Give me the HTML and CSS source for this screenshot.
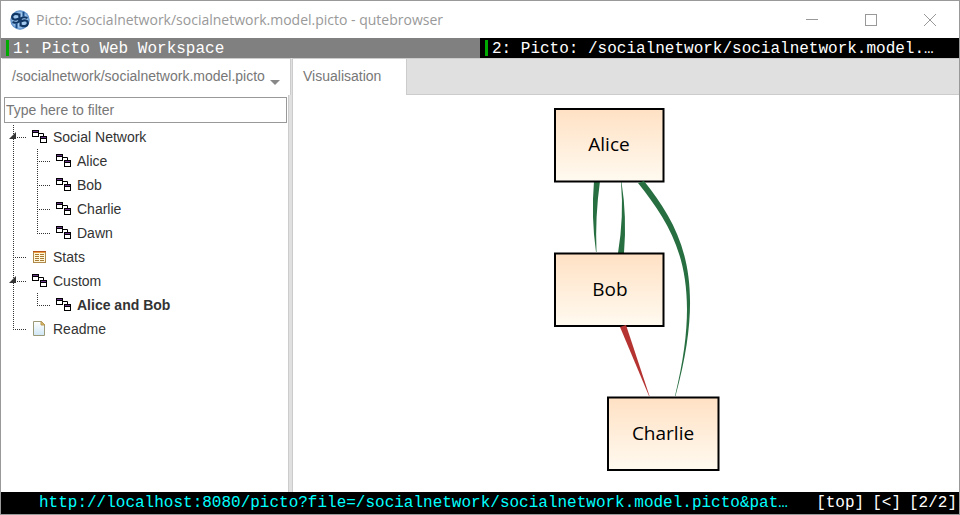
FILE: index.html
```html
<!DOCTYPE html>
<html lang="en">
<head>
<meta charset="utf-8">
<title>Picto: /socialnetwork/socialnetwork.model.picto - qutebrowser</title>
<link rel="stylesheet" href="styles.css">
</head>
<body>
<svg class="sprites" aria-hidden="true">
  <symbol id="graph" viewBox="0 0 16 16">
    <path d="M7 4.500H11.500V7" fill="none" stroke="#000"/>
    <rect x=".5" y="1.500" width="6" height="6" fill="#fff" stroke="#000"/>
    <rect x="1" y="2" width="5" height="1" fill="#6b3a8c"/>
    <path d="M1 3.500H6" stroke="#000"/>
    <rect x="8.500" y="7.500" width="6" height="6" fill="#fff" stroke="#000"/>
    <rect x="9" y="8" width="5" height="1" fill="#6b3a8c"/>
    <path d="M9 9.500H14" stroke="#000"/>
  </symbol>
  <symbol id="table" viewBox="0 0 16 16">
    <rect x="1.500" y="2.500" width="12" height="11" fill="#fff7dc" stroke="#b08a4a"/>
    <path d="M1 2.500H14" stroke="#b5541c"/>
    <path d="M2 3.500H13" stroke="#f0a040"/>
    <path d="M3 5.500H7M8 5.500H12M3 7.500H7M8 7.500H12M3 9.500H7M8 9.500H12M3 11.500H7M8 11.500H12" stroke="#a87a32"/>
  </symbol>
  <symbol id="page" viewBox="0 0 16 16">
    <linearGradient id="sheet" x2="0" y2="1"><stop offset="0" stop-color="#fff"/><stop offset="1" stop-color="#cfe6f5"/></linearGradient>
    <path d="M1.500 .5H9.500L12.500 3.500V14.500H1.500Z" fill="url(#sheet)" stroke="#9b9a78"/>
    <path d="M9 .5V4H13Z" fill="#dfb967" stroke="#b99a52"/>
  </symbol>
</svg>
<div class="window">
  <header class="titlebar">
    <svg class="logo" viewBox="0 0 20 20" aria-hidden="true">
      <radialGradient id="orb"><stop offset="0" stop-color="#b9dbfa"/><stop offset=".75" stop-color="#9cc4ec"/><stop offset="1" stop-color="#477fbd"/></radialGradient>
      <circle cx="10" cy="10" r="9.700" fill="url(#orb)"/>
      <path d="M8.800 4.600C5.500 3 2.300 4.200 2.200 6.800C2.200 9.800 5.500 10.300 8.500 8.800M9.400 3.500V10C9.400 12.500 6.500 13.600 2.500 12M10.600 16.500V10C10.600 7.500 13.500 6.400 17.500 8M11.200 15.400C14.500 17 17.700 15.800 17.800 13.200C17.800 10.200 14.500 9.700 11.500 11.200" fill="none" stroke="#103765" stroke-width="2.200"/>
      <path d="M13.500 2V6.500M6.500 18V13.500" stroke="#174b85" stroke-width="2"/>
    </svg>
    <h1 class="caption">Picto: /socialnetwork/socialnetwork.model.picto - qutebrowser</h1>
    <button class="control" aria-label="Minimise"><svg viewBox="0 0 12 12"><path d="M0 5.500H12"/></svg></button>
    <button class="control" aria-label="Maximise"><svg viewBox="0 0 12 12"><rect x=".5" y=".5" width="11" height="11"/></svg></button>
    <button class="control" aria-label="Close"><svg viewBox="0 0 12 12"><path d="M0 0L12 12M12 0L0 12"/></svg></button>
  </header>
  <nav class="tabs">
    <a class="tab" href="#workspace">1: Picto Web Workspace</a>
    <a class="tab current" href="#picto">2: Picto: /socialnetwork/socialnetwork.model.…</a>
  </nav>
  <main class="panes">
    <aside class="side">
      <div class="side-head"><button class="file-tab"><span>/socialnetwork/socialnetwork.model.picto</span><i class="caret"></i></button></div>
      <div class="side-body">
        <input class="filter" type="text" placeholder="Type here to filter" aria-label="Filter views">
        <ul class="tree">
          <li>
            <div class="row"><button class="toggle" aria-label="Collapse Social Network"></button><svg class="icon"><use href="#graph"/></svg><a href="#n1">Social Network</a></div>
            <ul class="branch">
              <li class="row"><svg class="icon"><use href="#graph"/></svg><a href="#n2">Alice</a></li>
              <li class="row"><svg class="icon"><use href="#graph"/></svg><a href="#n3">Bob</a></li>
              <li class="row"><svg class="icon"><use href="#graph"/></svg><a href="#n4">Charlie</a></li>
              <li class="row"><svg class="icon"><use href="#graph"/></svg><a href="#n5">Dawn</a></li>
            </ul>
          </li>
          <li class="row"><svg class="icon"><use href="#table"/></svg><a href="#n6">Stats</a></li>
          <li>
            <div class="row"><button class="toggle" aria-label="Collapse Custom"></button><svg class="icon"><use href="#graph"/></svg><a href="#n7">Custom</a></div>
            <ul class="branch">
              <li class="row"><svg class="icon"><use href="#graph"/></svg><a class="active" href="#n8">Alice and Bob</a></li>
            </ul>
          </li>
          <li class="row"><svg class="icon"><use href="#page"/></svg><a href="#n9">Readme</a></li>
        </ul>
      </div>
    </aside>
    <section class="view">
      <div class="view-head"><button class="view-tab">Visualisation</button></div>
      <div class="canvas">
        <svg class="diagram" viewBox="0 0 168 364" role="img" aria-label="Social network of Alice, Bob and Charlie">
          <linearGradient id="peach" x2="0" y2="1"><stop offset="0" stop-color="#ffe1c4"/><stop offset="1" stop-color="#fffaf0"/></linearGradient>
          <g fill="#276e41">
            <path d="M41 74H47Q42 110 43.500 145H43Q38 110 41 74Z"/>
            <path d="M68 75H68.500Q74 110 71 146H65Q71 110 68 75Z"/>
          </g>
          <g class="node">
            <rect x="2" y="2" width="108.500" height="72.500"/>
            <rect x="2" y="146.500" width="108.500" height="72.500"/>
            <rect x="55" y="290.500" width="110.500" height="72.500"/>
          </g>
          <path d="M91 74C128 121 155 170 122.500 289H122C151 170 123 124 85 76Z" fill="#276e41"/>
          <path d="M67 220L73 218L96.500 289H96Z" fill="#b53331"/>
          <g class="names">
            <text x="56" y="44">Alice</text>
            <text x="57" y="189">Bob</text>
            <text x="110" y="333">Charlie</text>
          </g>
        </svg>
      </div>
    </section>
  </main>
  <footer class="status">
    <span class="url">http://localhost:8080/picto?file=/socialnetwork/socialnetwork.model.picto&amp;pat…</span>
    <span>[top]</span><span>[&lt;]</span><span>[2/2]</span>
  </footer>
</div>
</body>
</html>
```
FILE: styles.css
```css
* { box-sizing: border-box; }
body { margin: 0; font: 14px/24px "Liberation Sans", Arial, sans-serif; color: #333; }
button { padding: 0; border: 0; background: none; font: inherit; color: inherit; }
a { color: inherit; text-decoration: none; }
ul { margin: 0; padding: 0; list-style: none; }
.sprites { position: absolute; width: 0; height: 0; }
.window { display: flex; flex-direction: column; min-height: 100vh; border: 1px solid #999; background: #fff; }

.titlebar { display: flex; align-items: center; height: 37px; padding-left: 9px; }
.logo { width: 20px; height: 20px; flex: none; }
.caption { flex: 1; margin: 0 0 0 6px; font: 14px/24px "Open Sans", sans-serif; color: #999; white-space: nowrap; }
.control { display: flex; justify-content: center; width: 59px; }
.control svg { width: 12px; height: 12px; fill: none; stroke: #999; }

.tabs, .status { font: 16px/22px "Liberation Mono", monospace; color: #fff; }
.tabs { display: flex; }
.tab { flex: 1 1 0; min-width: 0; padding: 0 6px 0 12px; height: 20px; overflow: hidden; white-space: nowrap; text-overflow: ellipsis; background: linear-gradient(#0a0, #0a0) 5px 2px / 3px 16px no-repeat #808080; }
.tab.current { background-color: #000; }

.panes { display: flex; flex: 1; padding-left: 1px; }
.side { display: flex; flex-direction: column; width: 291px; flex: none; border-right: 1px solid #ccc; background: #e0e0e0; }
.side-head { height: 37px; }
.file-tab { display: flex; align-items: center; width: 289px; height: 37px; padding: 0 10px 2px; border-top: 1px solid #ccc; border-right: 1px solid #ccc; background: #fff; color: #777; white-space: nowrap; }
.caret { margin: 12px 0 0 5px; border: 5px solid transparent; border-top-color: #888; border-bottom: 0; }
.side-body { flex: 1; width: 287px; padding: 2px 1px 0 2px; border-right: 1px solid #ccc; background: #fff; }
.filter { display: block; width: 283px; height: 26px; padding: 0 1px; border: 1px solid #999; font: inherit; }
.filter::placeholder { color: #777; opacity: 1; }
.tree { margin: 2px 0 0 9px; }
.tree, .branch { background: repeating-linear-gradient(#333 0 1px, transparent 1px 2px) 0 0 / 1px calc(100% - 12px) no-repeat; }
.branch { margin-left: 24px; }
.row { position: relative; display: flex; align-items: center; height: 24px; }
.row::before { content: ""; width: 13px; height: 1px; margin-right: 6px; background: repeating-linear-gradient(90deg, #333 0 1px, transparent 1px 2px); }
.toggle { position: absolute; left: -4px; top: 7px; width: 7px; height: 7px; background: #333; clip-path: polygon(100% 0, 100% 100%, 0 100%); }
.icon { width: 16px; height: 16px; margin-right: 5px; }
.active { font-weight: bold; }

.view { display: flex; flex-direction: column; flex: 1; min-width: 0; }
.view-head { height: 37px; border-top: 1px solid #ccc; border-bottom: 1px solid #ccc; background: #e0e0e0; }
.view-tab { width: 114px; height: 36px; padding: 0 0 2px 10px; border-right: 1px solid #ccc; background: #fff; color: #777; text-align: left; }
.canvas { display: flex; flex: 1; justify-content: center; align-items: flex-start; padding: 12px 0 0 22px; }
.diagram { width: 168px; height: 364px; }
.node { fill: url(#peach); stroke: #000; stroke-width: 2px; }
.names { font: 19px "Open Sans", sans-serif; fill: #000; text-anchor: middle; }

.status { display: flex; gap: 8px; height: 22px; padding: 0 2px 0 38px; background: #000; white-space: nowrap; }
.url { flex: 1; min-width: 0; overflow: hidden; text-overflow: ellipsis; color: #0ff; }
```
